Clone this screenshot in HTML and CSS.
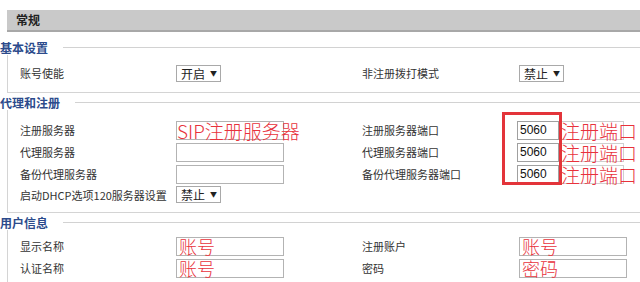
FILE: index.html
```html
<!DOCTYPE html>
<html lang="zh">
<head>
<meta charset="utf-8">
<link rel="stylesheet" href="styles.css">
</head>
<body>
<div class="page">
  <div class="header">常规</div>

  <div class="legend">基本设置</div>
  <div class="group g-basic">
    <div class="grid">
      <div class="label">账号使能</div>
      <div class="ctl"><span class="select">开启<span class="arrow">▼</span></span></div>
      <div class="label">非注册拨打模式</div>
      <div class="ctl r"><span class="select">禁止<span class="arrow">▼</span></span></div>
    </div>
  </div>

  <div class="legend">代理和注册</div>
  <div class="group g-proxy">
    <div class="grid proxy-rows">
      <div class="label">注册服务器</div>
      <div class="ctl"><span class="box anno big">SIP注册服务器</span></div>
      <div class="label">注册服务器端口</div>
      <div class="ctl"><span class="box port">5060</span><span class="box note anno big">注册端口</span></div>

      <div class="label">代理服务器</div>
      <div class="ctl"><span class="box"></span></div>
      <div class="label">代理服务器端口</div>
      <div class="ctl"><span class="box port">5060</span><span class="box note anno big">注册端口</span></div>

      <div class="label">备份代理服务器</div>
      <div class="ctl"><span class="box"></span></div>
      <div class="label">备份代理服务器端口</div>
      <div class="ctl"><span class="box port">5060</span><span class="box note anno big">注册端口</span></div>

      <div class="label">启动DHCP选项120服务器设置</div>
      <div class="ctl"><span class="select">禁止<span class="arrow">▼</span></span></div>
      <div class="label"></div>
      <div class="ctl"></div>
    </div>
    <div class="mark"></div>
  </div>

  <div class="legend">用户信息</div>
  <div class="group g-user">
    <div class="grid rows22">
      <div class="label">显示名称</div>
      <div class="ctl"><span class="box anno mid">账号</span></div>
      <div class="label">注册账户</div>
      <div class="ctl r"><span class="box anno mid">账号</span></div>

      <div class="label">认证名称</div>
      <div class="ctl"><span class="box anno mid">账号</span></div>
      <div class="label">密码</div>
      <div class="ctl r"><span class="box anno mid">密码</span></div>
    </div>
  </div>
</div>
</body>
</html>
```
FILE: styles.css
```css
html, body {
  margin: 0;
  padding: 0;
  background: #ffffff;
  overflow: hidden;
}
body {
  font-family: "Noto Sans CJK SC", "Microsoft YaHei", sans-serif;
  font-size: 11px;
  color: #333333;
}
.page {
  padding-top: 10px;
  width: 640px;
}
.header {
  margin-left: 7px;
  height: 20px;
  line-height: 20px;
  background: #c9c9c9;
  border-bottom: 2px solid #a8a8a8;
  padding-left: 9px;
  font-weight: bold;
  font-size: 12px;
  color: #222;
}
.legend {
  display: flex;
  align-items: center;
  height: 16px;
  color: #2c4b8c;
  font-weight: bold;
  font-size: 12px;
  margin-top: 1px;
}
.header + .legend {
  margin-top: 7px;
}
.legend::after {
  content: "";
  flex: 1;
  border-top: 1px solid #d2d2d2;
  margin-left: 15px;
}
.group {
  position: relative;
  margin-left: 7px;
  border-left: 1px solid #d4d4d4;
  border-bottom: 1px solid #d4d4d4;
}
.g-basic { padding: 8px 0 9px; }
.g-proxy { padding: 9px 0 8px; }
.g-user { padding: 5px 0 10px; }
.grid {
  display: grid;
  grid-template-columns: 156px 186px 155px 1fr;
  grid-auto-rows: 20px;
  align-items: center;
  padding-left: 12px;
}
.proxy-rows {
  grid-template-rows: 22px 22px 22px 19px;
}
.rows22 {
  grid-auto-rows: 22px;
}
.label {
  white-space: nowrap;
  line-height: 16px;
}
.ctl {
  display: flex;
  align-items: center;
  height: 100%;
}
.ctl.r { padding-left: 2px; }
.select {
  display: inline-flex;
  align-items: center;
  height: 15px;
  border: 1px solid #a9a9a9;
  padding: 0 3px 0 4px;
  gap: 5px;
  font-size: 12px;
  color: #222;
  line-height: 15px;
}
.arrow {
  font-size: 7px;
  color: #222;
}
.box {
  display: inline-block;
  box-sizing: border-box;
  width: 108px;
  height: 19px;
  border: 1px solid #b3b3b3;
  background: #fff;
  white-space: nowrap;
  overflow: visible;
  line-height: 17px;
}
.port {
  width: 42px;
  padding-left: 2px;
  color: #111;
  font-size: 12px;
  font-family: "Liberation Sans", Arial, sans-serif;
  border-color: #a0a0a0;
}
.note {
  width: 64px;
  margin-left: 1px;
  border-color: #cfcfcf;
}
.anno {
  color: #e8323c;
  font-weight: 300;
}
.big {
  font-size: 19px;
  line-height: 17px;
}
.mid {
  font-size: 18px;
  line-height: 17px;
  padding-left: 2px;
}
.mark {
  position: absolute;
  left: 494px;
  top: 2px;
  width: 54px;
  height: 67px;
  border: 3px solid #e3343a;
}
```
